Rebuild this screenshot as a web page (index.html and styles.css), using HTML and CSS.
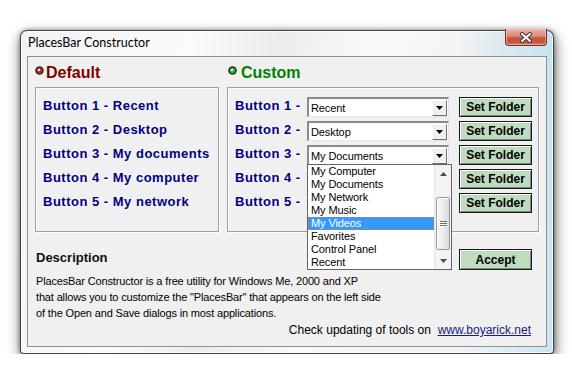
FILE: index.html
```html
<!DOCTYPE html>
<html>
<head>
<meta charset="utf-8">
<title>PlacesBar Constructor</title>
<link rel="stylesheet" href="styles.css">
</head>
<body>
<div class="window">
  <div class="titlebar">
    <span class="title">PlacesBar Constructor</span>
    <div class="close">
      <svg width="16" height="11" viewBox="0 0 16 11"><path d="M4 2 L12 9 M12 2 L4 9" stroke="#3a3a3a" stroke-width="4" stroke-linecap="round"/><path d="M4 2 L12 9 M12 2 L4 9" stroke="#fff" stroke-width="2" stroke-linecap="round"/></svg>
    </div>
  </div>
  <div class="client">
    <div class="columns">
      <section class="col">
        <h2 class="heading heading-red"><svg class="dot" width="9" height="9" viewBox="0 0 9 9"><circle cx="4.5" cy="4.5" r="4.3" fill="#2e2e2e"/><circle cx="4.5" cy="4.5" r="2.8" fill="#e01818"/><circle cx="4" cy="4" r="1.2" fill="#fff"/></svg>Default</h2>
        <div class="group">
          <div class="row"><span class="label">Button 1 - Recent</span></div>
          <div class="row"><span class="label">Button 2 - Desktop</span></div>
          <div class="row"><span class="label">Button 3 - My documents</span></div>
          <div class="row"><span class="label">Button 4 - My computer</span></div>
          <div class="row"><span class="label">Button 5 - My network</span></div>
        </div>
      </section>
      <section class="col col-custom">
        <h2 class="heading heading-green"><svg class="dot" width="9" height="9" viewBox="0 0 9 9"><circle cx="4.5" cy="4.5" r="4.3" fill="#2e2e2e"/><circle cx="4.5" cy="4.5" r="2.8" fill="#22c022"/><circle cx="4" cy="4" r="1.2" fill="#fff"/></svg>Custom</h2>
        <div class="group">
          <div class="row">
            <span class="label label-short">Button 1 -</span>
            <div class="combo"><span class="combo-text">Recent</span><span class="combo-btn"><svg width="7" height="4" viewBox="0 0 7 4"><path d="M0 0 H7 L3.5 4 Z" fill="#000"/></svg></span></div>
            <button class="btn">Set Folder</button>
          </div>
          <div class="row">
            <span class="label label-short">Button 2 -</span>
            <div class="combo"><span class="combo-text">Desktop</span><span class="combo-btn"><svg width="7" height="4" viewBox="0 0 7 4"><path d="M0 0 H7 L3.5 4 Z" fill="#000"/></svg></span></div>
            <button class="btn">Set Folder</button>
          </div>
          <div class="row">
            <span class="label label-short">Button 3 -</span>
            <div class="combo combo-open"><span class="combo-text">My Documents</span><span class="combo-btn"><svg width="7" height="4" viewBox="0 0 7 4"><path d="M0 0 H7 L3.5 4 Z" fill="#000"/></svg></span>
              <div class="dropdown">
                <ul class="options">
                  <li>My Computer</li>
                  <li>My Documents</li>
                  <li>My Network</li>
                  <li>My Music</li>
                  <li class="selected">My Videos</li>
                  <li>Favorites</li>
                  <li>Control Panel</li>
                  <li>Recent</li>
                </ul>
                <div class="scrollbar">
                  <div class="arrow"><svg width="7" height="4" viewBox="0 0 7 4"><path d="M0 4 H7 L3.5 0 Z" fill="#4a4a4a"/></svg></div>
                  <div class="track"><div class="thumb"><span></span><span></span><span></span></div></div>
                  <div class="arrow"><svg width="7" height="4" viewBox="0 0 7 4"><path d="M0 0 H7 L3.5 4 Z" fill="#4a4a4a"/></svg></div>
                </div>
              </div>
            </div>
            <button class="btn">Set Folder</button>
          </div>
          <div class="row">
            <span class="label label-short">Button 4 -</span>
            <div class="combo"><span class="combo-text"></span><span class="combo-btn"><svg width="7" height="4" viewBox="0 0 7 4"><path d="M0 0 H7 L3.5 4 Z" fill="#000"/></svg></span></div>
            <button class="btn">Set Folder</button>
          </div>
          <div class="row">
            <span class="label label-short">Button 5 -</span>
            <div class="combo"><span class="combo-text"></span><span class="combo-btn"><svg width="7" height="4" viewBox="0 0 7 4"><path d="M0 0 H7 L3.5 4 Z" fill="#000"/></svg></span></div>
            <button class="btn">Set Folder</button>
          </div>
        </div>
      </section>
    </div>
    <div class="desc-head">
      <h3 class="desc-title">Description</h3>
      <button class="btn btn-accept">Accept</button>
    </div>
    <p class="desc">PlacesBar Constructor is a free utility for Windows Me, 2000 and XP<br>that allows you to customize the "PlacesBar" that appears on the left side<br>of the Open and Save dialogs in most applications.</p>
    <p class="update">Check updating of tools on&nbsp; <a class="link" href="#">www.boyarick.net</a></p>
  </div>
</div>
</body>
</html>
```
FILE: styles.css
```css
* { box-sizing: border-box; }
html, body { margin: 0; padding: 0; background: #fff; }
body { font-family: "Liberation Sans", Arial, sans-serif; color: #000; }

.window {
  margin: 30px 0 0 20px;
  width: 534px;
  height: 324px;
  border: 1px solid rgba(35, 35, 35, 0.85);
  border-radius: 7px 7px 4px 4px;
  background:
    linear-gradient(to right, rgba(255,255,255,0) 82%, rgba(110,195,235,0.35) 100%),
    linear-gradient(105deg, #f2f2f2 0%, #fbfbfb 28%, #ececec 42%, #fafafa 58%, #f1f1f1 78%, #f8f8f8 100%);
  box-shadow: 1px 5px 14px rgba(0,0,0,0.6), 0 0 4px rgba(0,0,0,0.4), inset 0 0 0 1px rgba(255,255,255,0.85);
  display: flex;
  flex-direction: column;
  padding: 0 6px 6px 6px;
}

.titlebar {
  height: 25px;
  display: flex;
  justify-content: space-between;
  align-items: flex-start;
}
.title {
  font-family: Lato, "Open Sans", sans-serif;
  font-size: 12.5px;
  line-height: 16px;
  margin: 4px 0 0 1px;
  color: #000;
}
.close {
  width: 42px;
  height: 17px;
  margin-top: -2px;
  border: 1px solid #6e3028;
  border-top: none;
  border-radius: 0 0 4px 4px;
  background: linear-gradient(to bottom, #eab0a2 0%, #dd8a78 45%, #c9533e 55%, #c8523a 80%, #d9785e 100%);
  box-shadow: inset 0 0 0 1px rgba(255,210,200,0.55);
  display: flex;
  align-items: center;
  justify-content: center;
}

.client {
  height: 291px;
  border: 1px solid #8d9094;
  background: #f0f0f0;
  padding: 6px 7px 0 7px;
}

.columns {
  display: grid;
  grid-template-columns: 184px 312px;
  column-gap: 8px;
}
.heading {
  margin: 0 0 4px 0;
  height: 20px;
  display: flex;
  align-items: flex-start;
  gap: 2px;
  font-size: 16px;
  line-height: 20px;
  font-weight: bold;
}
.heading .dot { margin-top: 3px; }
.col-custom .heading { padding-left: 1px; gap: 4px; }
.heading-red { color: #800000; }
.heading-green { color: #008000; }

.group {
  height: 145px;
  border: 1px solid #a0a0a0;
  box-shadow: inset 1px 1px 0 #fff, 1px 1px 0 #fff;
  padding: 9px 6px 0 7px;
  display: flex;
  flex-direction: column;
  gap: 4px;
}
.row {
  height: 20px;
  display: flex;
  align-items: flex-start;
}
.label {
  font-size: 13px;
  line-height: 17px;
  font-weight: bold;
  letter-spacing: 0.5px;
  color: #000080;
  white-space: nowrap;
}
.label-short { width: 72px; flex: none; }

.combo {
  position: relative;
  width: 142px;
  height: 20px;
  border-style: solid;
  border-width: 2px 1px 1px 2px;
  border-color: #8a8a8a #e4e4e4 #e4e4e4 #8a8a8a;
  background: #fff;
  display: flex;
  align-items: center;
  justify-content: space-between;
  margin-right: 10px;
}
.combo-text {
  font-size: 11px;
  line-height: 16px;
  padding-left: 2px;
  letter-spacing: -0.1px;
  white-space: nowrap;
}
.combo-btn {
  width: 15px;
  height: 16px;
  margin-right: 1px;
  background: #f0f0f0;
  border: 1px solid;
  border-color: #fff #707070 #707070 #fff;
  display: flex;
  align-items: center;
  justify-content: center;
}

.btn {
  width: 73px;
  height: 20px;
  padding: 0;
  border: 1px solid #1a1a1a;
  background: #c0dcc0;
  box-shadow: inset 1px 1px 0 #fff, inset -1px -1px 0 #7a8a7a;
  font-family: "Liberation Sans", Arial, sans-serif;
  font-size: 12px;
  font-weight: bold;
  color: #000;
}

.dropdown {
  position: absolute;
  top: 100%;
  left: -2px;
  width: 145px;
  height: 106px;
  border: 1px solid #646464;
  background: #fff;
  display: flex;
  z-index: 2;
}
.options {
  list-style: none;
  margin: 0;
  padding: 0;
  flex: 1;
}
.options li {
  height: 13px;
  font-size: 11px;
  line-height: 13px;
  padding-left: 3px;
  letter-spacing: -0.1px;
  white-space: nowrap;
}
.options li.selected {
  background: #3399ff;
  color: #fff;
  outline: 1px dotted #c88040;
  outline-offset: -1px;
}
.scrollbar {
  width: 17px;
  background: #f3f3f3;
  border-left: 1px solid #e6e6e6;
  display: flex;
  flex-direction: column;
}
.arrow {
  height: 17px;
  display: flex;
  align-items: center;
  justify-content: center;
}
.track { flex: 1; padding: 15px 1px 0 1px; }
.thumb {
  height: 53px;
  border: 1px solid #9a9a9a;
  border-radius: 2px;
  background: linear-gradient(to right, #f7f7f7 0%, #ececec 50%, #d9d9d9 100%);
  box-shadow: inset 1px 1px 0 #fff;
  display: flex;
  flex-direction: column;
  justify-content: center;
  align-items: center;
  gap: 1px;
}
.thumb span {
  display: block;
  width: 7px;
  height: 1px;
  background: #6a6a6a;
  box-shadow: 0 1px 0 #fff;
}

.desc-head {
  margin-top: 17px;
  padding-left: 1px;
  display: flex;
  justify-content: space-between;
  align-items: flex-start;
}
.desc-title {
  margin: 1px 0 0 0;
  font-size: 13px;
  line-height: 16px;
  font-weight: bold;
  color: #101010;
}
.btn-accept { height: 21px; margin-right: 7px; }

.desc {
  margin: 3px 0 0 0;
  padding-left: 1px;
  font-size: 11px;
  line-height: 16px;
  letter-spacing: -0.15px;
  white-space: nowrap;
}
.update {
  margin: 1px 0 0 0;
  padding-right: 8px;
  text-align: right;
  font-size: 12px;
  line-height: 16px;
}
.link { color: #1a1a80; text-decoration: underline; }
```
